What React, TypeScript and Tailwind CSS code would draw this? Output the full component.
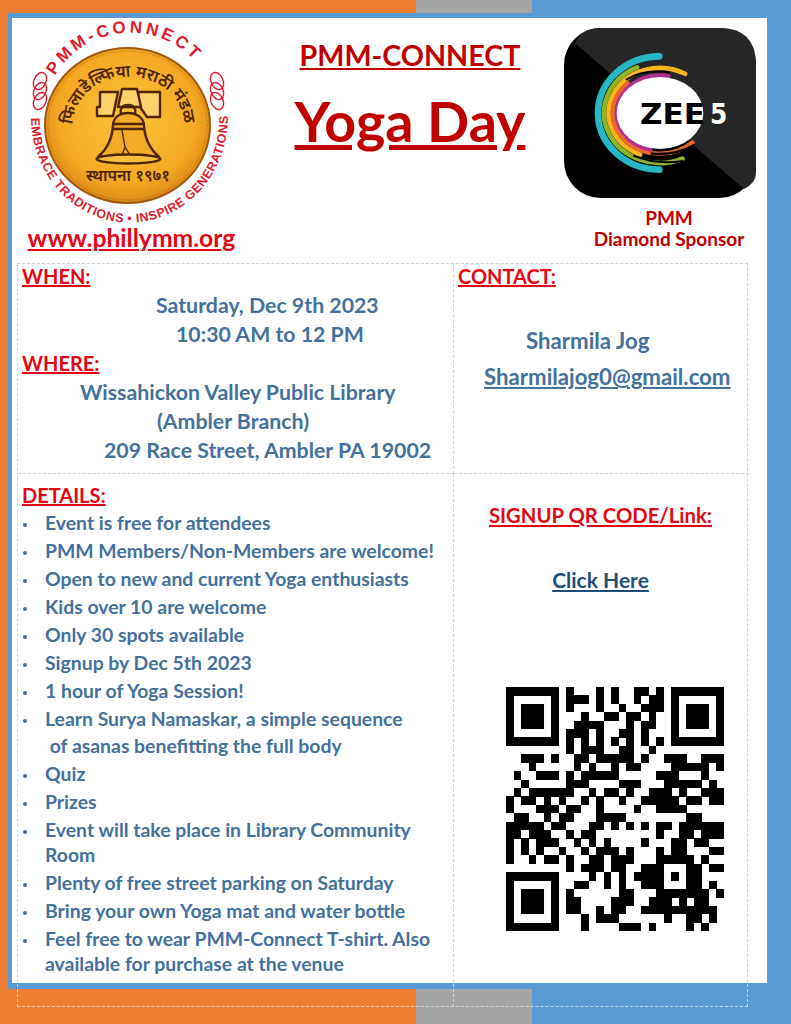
const font = { fontFamily: "Lato, 'Noto Sans', sans-serif" };

// one string per row of the code, spaces only to keep it readable
const QR_ROWS = [
  "1111111 010001010011010 1111111",
  "1000001 011101010010110 1000001",
  "1011101 010001001001110 1011101",
  "1011101 000100110110100 1011101",
  "1011101 001111000101100 1011101",
  "1000001 011101001101000 1000001",
  "1111111 010101010101010 1111111",
  "00000000 1011100110010 00000000",
  "00111 01001 10111 11010 01110 0111",
  "00010 00001 01001 01100 00111 1101",
  "01001 11010 11111 00000 11100 0100",
  "00100 00011 10000 11100 01111 1010",
  "01011 11110 01011 01001 11010 0111",
  "10110 10100 10100 10011 11101 1011",
  "10001 11011 00100 00100 11110 0000",
  "01100 10110 00111 10000 00001 1000",
  "11111 01100 01101 01010 11011 1111",
  "11011 10010 11000 00000 10011 0111",
  "10101 11001 01010 00010 00110 1100",
  "10101 00100 10111 01000 10110 0011",
  "10010 11010 01101 11000 11111 0100",
  "00000 00010 11101 10011 10001 1011",
  "11111 11000 01010 10111 10101 1000",
  "10000 01001 10010 10011 10001 1010",
  "10111 01010 00000 11000 11111 1101",
  "10111 01011 00001 11001 11010 1100",
  "10111 01011 00101 10011 11111 1110",
  "10000 01000 10111 00000 01001 1010",
  "11111 11000 10000 11101 00001 0100",
].map((row) => row.replace(/ /g, ""));

const DETAILS = [
  { text: "Event is free for attendees" },
  { text: "PMM Members/Non-Members are welcome!" },
  { text: "Open to new and current Yoga enthusiasts" },
  { text: "Kids over 10 are welcome" },
  { text: "Only 30 spots available" },
  { text: "Signup by Dec 5th 2023" },
  { text: "1 hour of Yoga Session!" },
  { text: "Learn Surya Namaskar, a simple sequence", tight: true },
  { text: " of asanas benefitting the full body", plain: true },
  { text: "Quiz" },
  { text: "Prizes" },
  { text: "Event will take place in Library Community", more: "Room" },
  { text: "Plenty of free street parking on Saturday" },
  { text: "Bring your own Yoga mat and water bottle" },
  { text: "Feel free to wear PMM-Connect T-shirt. Also", more: "available for purchase at the venue" },
];

function PmmLogo() {
  return (
    <svg width="232" height="206" viewBox="12 18 232 206">
      <defs>
        <radialGradient id="coin" cx="50%" cy="45%" r="60%">
          <stop offset="0%" stopColor="#fbc63c" />
          <stop offset="70%" stopColor="#f5a823" />
          <stop offset="100%" stopColor="#d17d12" />
        </radialGradient>
        <path id="topArc" d="M55 76 A86 83 0 0 1 206 76" />
        <path id="bottomArc" d="M31 117 A97 104 0 0 0 228 117" />
        <path id="hindiArc" d="M73 125 A54 47 0 0 1 184 125" />
      </defs>
      <ellipse cx="127.5" cy="125.5" rx="82.5" ry="77.5" fill="url(#coin)" stroke="#a0590c" strokeWidth="2" />
      <ellipse cx="127.5" cy="125.5" rx="79.5" ry="74.5" fill="none" stroke="#a8660f" strokeWidth="1" strokeDasharray="1 1.5" />
      <text fontFamily="'Liberation Sans', sans-serif" fontWeight="700" fontSize="17" fill="#e01b2d" letterSpacing="3.2">
        <textPath href="#topArc">PMM-CONNECT</textPath>
      </text>
      <text fontFamily="'Liberation Sans', sans-serif" fontSize="12.5" fill="#e01b2d" letterSpacing="0.55">
        <textPath href="#bottomArc" startOffset="1">EMBRACE TRADITIONS • INSPIRE GENERATIONS</textPath>
      </text>
      {[81, 91, 101].map((y) => (
        <g key={y} fill="none" stroke="#e01b2d" strokeWidth="1.4">
          <ellipse cx="40" cy={y} rx="6" ry="9" transform={`rotate(25 40 ${y})`} />
          <ellipse cx="217" cy={y} rx="6" ry="9" transform={`rotate(-25 217 ${y})`} />
        </g>
      ))}
      <text fontFamily="'Noto Sans', 'DejaVu Sans', sans-serif" fontSize="16.5" fontWeight="600" fill="#4a2508">
        <textPath href="#hindiArc">फिलाडेल्फिया मराठी मंडळ</textPath>
      </text>
      <text x="128" y="181" textAnchor="middle" fontFamily="'Noto Sans', 'DejaVu Sans', sans-serif" fontSize="16" fontWeight="600" fill="#4a2508">
        स्थापना १९७१
      </text>
      {/* bell and yoke */}
      <g fill="none" stroke="#4f2708" strokeWidth="2.4" strokeLinejoin="round">
        <path d="M100 92 H118 L113 116 H97 V107 H100 Z" fill="#fbd36a" />
        <path d="M138 92 H160 V117 H147 L140 107 Z" fill="#fbd36a" />
        <path d="M122 89 H137 L141 107 H118 Z" fill="#fbd36a" />
        <path d="M128 105 C120 105 119 113 123 116 M128 105 C136 105 137 113 133 116" />
        <path d="M113 126 C113 117 120 113 128 113 C136 113 144 117 144 126 C145 141 151 150 159 157 H98 C106 150 112 141 113 126 Z" fill="#f3ab28" />
        <path d="M112 124 H145 M112 129 H145" />
        <ellipse cx="128.5" cy="159" rx="32" ry="4.5" fill="#f9c040" />
        <path d="M122 130 L125 147 L122 155 M125 147 L130 155" strokeWidth="1.4" />
      </g>
    </svg>
  );
}

// arc of an ellipse round the ring centre, running through the left side
function ringArc(rx: number, ry: number, from: [number, number], to: [number, number]) {
  const a1 = Math.atan2((from[1] - 340) / ry, (from[0] - 360) / rx);
  const a2 = Math.atan2((to[1] - 340) / ry, (to[0] - 360) / rx);
  const delta = ((a1 - a2) % (2 * Math.PI) + 2 * Math.PI) % (2 * Math.PI);
  const pt = (a: number) => `${360 + rx * Math.cos(a)} ${340 + ry * Math.sin(a)}`;
  return `M${pt(a1)} A${rx} ${ry} 0 ${delta > Math.PI ? 1 : 0} 0 ${pt(a2)}`;
}

function ZeeLogo() {
  return (
    <svg width="192" height="170" viewBox="72 85 576 510" className="block">
      <rect x="72" y="85" width="576" height="510" rx="110" fill="#000000" />
      <path d="M105 130 Q125 85 182 85 H538 Q648 85 648 195 V520 Q648 550 612 568 Z" fill="#262626" />
      <g fill="none" strokeLinecap="round">
        <path d={ringArc(186, 170, [358, 170], [358, 510])} stroke="#29b6c4" strokeWidth="20" />
        <path d={ringArc(168, 150, [290, 200], [432, 486])} stroke="#8db52a" strokeWidth="14" />
        <path d={ringArc(154, 135, [442, 212], [300, 466])} stroke="#f6b61b" strokeWidth="14" />
        <path d={ringArc(142, 122, [252, 240], [468, 438])} stroke="#ee6a2c" strokeWidth="13" />
        <path d={ringArc(130, 113, [388, 222], [330, 458])} stroke="#b52f91" strokeWidth="12" />
      </g>
      <path d="M258 240 Q315 205 392 219" fill="none" stroke="#000000" strokeWidth="5" />
      <path d="M280 468 Q350 497 430 484" fill="none" stroke="#000000" strokeWidth="6" />
      <path d="M332 461 Q400 470 462 436" fill="none" stroke="#000000" strokeWidth="7" />
      <ellipse cx="360" cy="340" rx="130" ry="108" fill="#ffffff" />
      <text x="300" y="372" textLength="195" lengthAdjust="spacingAndGlyphs" fontFamily="'DejaVu Sans', sans-serif" fontWeight="700" fontSize="86" fill="#000000">ZEE</text>
      <text x="510" y="372" textLength="52" lengthAdjust="spacingAndGlyphs" fontFamily="'DejaVu Sans', sans-serif" fontWeight="700" fontSize="86" fill="#ffffff">5</text>
    </svg>
  );
}

function QrCode() {
  return (
    <svg width="218" height="244" viewBox="0 0 29 29" preserveAspectRatio="none" shapeRendering="crispEdges" className="block">
      {QR_ROWS.map((row, y) =>
        row.split("").map((cell, x) => (cell === "1" ? <rect key={`${x}-${y}`} x={x} y={y} width="1.02" height="1.02" fill="#000000" /> : null))
      )}
    </svg>
  );
}

function Heading({ children, className }: { children: string; className?: string }) {
  return <p className={`text-[20px] font-bold leading-[29px] text-[#e30613] underline ${className ?? ""}`}>{children}</p>;
}

export default function App() {
  return (
    <div className="flex h-[1024px] w-[791px] flex-col overflow-hidden bg-[#5b9bd5] font-bold" style={font}>
      <div className="flex h-[13px]">
        <div className="w-[416px] bg-[#ed7d31]" />
        <div className="w-[116px] bg-[#a5a5a5]" />
        <div className="flex-1" />
      </div>

      <div className="flex h-[976px]">
        <div className="w-[8px] bg-[#ed7d31]" />
        <div className="relative z-10 flex-1 pb-[6px] pl-[4px] pr-[24px] pt-[5px]">
          <div className="h-[965px] bg-white">
            <header className="flex h-[245px]">
              <div className="flex w-[232px] flex-col">
                <PmmLogo />
                <p className="pl-[7px] text-center text-[24.7px] leading-[28px] text-[#e30613] underline">www.phillymm.org</p>
              </div>
              <div className="flex w-[320px] flex-col items-center pl-[12px] pt-[17px] text-[#c00000]">
                <h1 className="text-[28.7px] leading-[40px] underline">PMM-CONNECT</h1>
                <h2 className="mt-[11px] text-[55.6px] leading-[70px] underline">Yoga Day</h2>
              </div>
              <div className="flex w-[192px] flex-col pt-[10px]">
                <ZeeLogo />
                <div className="mt-[9px] pl-[18px] text-center text-[19px] leading-[21px] text-[#c00000]">
                  <p>PMM</p>
                  <p className="whitespace-nowrap">Diamond Sponsor</p>
                </div>
              </div>
            </header>

            <div className="ml-[5px] grid h-[744px] w-[731px] grid-cols-[436px_295px] grid-rows-[210px_533px] border border-dashed border-[#d4d4d4] text-[#44709c]">
              <section className="border-b border-r border-dashed border-[#d4d4d4] pl-[4px] text-[21.3px] leading-[29px]">
                <Heading className="-mt-[2px]">WHEN:</Heading>
                <p className="pl-[134px]">Saturday, Dec 9th 2023</p>
                <p className="pl-[154px]">10:30 AM to 12 PM</p>
                <Heading>WHERE:</Heading>
                <p className="pl-[58px]">Wissahickon Valley Public Library</p>
                <p className="pl-[135px]">(Ambler Branch)</p>
                <p className="pl-[82px]">209 Race Street, Ambler PA 19002</p>
              </section>

              <section className="border-b border-dashed border-[#d4d4d4] pl-[4px] text-[22.2px] leading-[29px]">
                <Heading className="-mt-[2px]">CONTACT:</Heading>
                <p className="mt-[35px] pl-[68px]">Sharmila Jog</p>
                <p className="mt-[7px] pl-[26px] underline">Sharmilajog0@gmail.com</p>
              </section>

              <section className="border-r border-dashed border-[#d4d4d4] pl-[4px] pt-[7px]">
                <Heading>DETAILS:</Heading>
                <ul className="-mt-[1px] text-[19.4px] leading-[28px]">
                  {DETAILS.map((item) => (
                    <li key={item.text} className={`flex ${item.tight ? "-mb-[1px]" : ""}`}>
                      <span className="w-[23px] shrink-0 pl-[1px] pt-[14px]">
                        {item.plain ? null : <span className="block h-[4px] w-[4px] rounded-full bg-[#44709c]" />}
                      </span>
                      <span className="whitespace-pre">
                        {item.text}
                        {item.more ? <span className="-mt-[3px] block">{item.more}</span> : null}
                      </span>
                    </li>
                  ))}
                </ul>
              </section>

              <section className="flex flex-col items-center pr-[2px] pt-[27px] text-[21px] leading-[29px]">
                <p className="text-[20.3px] text-[#e30613] underline">SIGNUP QR CODE/Link:</p>
                <p className="mt-[35px] text-[#1f4e79] underline">Click Here</p>
                <div className="ml-[28px] mt-[93px]">
                  <QrCode />
                </div>
              </section>
            </div>
          </div>
        </div>
      </div>

      <div className="flex h-[35px]">
        <div className="w-[416px] bg-[#ed7d31]" />
        <div className="w-[116px] bg-[#a5a5a5]" />
        <div className="flex-1" />
      </div>
    </div>
  );
}
